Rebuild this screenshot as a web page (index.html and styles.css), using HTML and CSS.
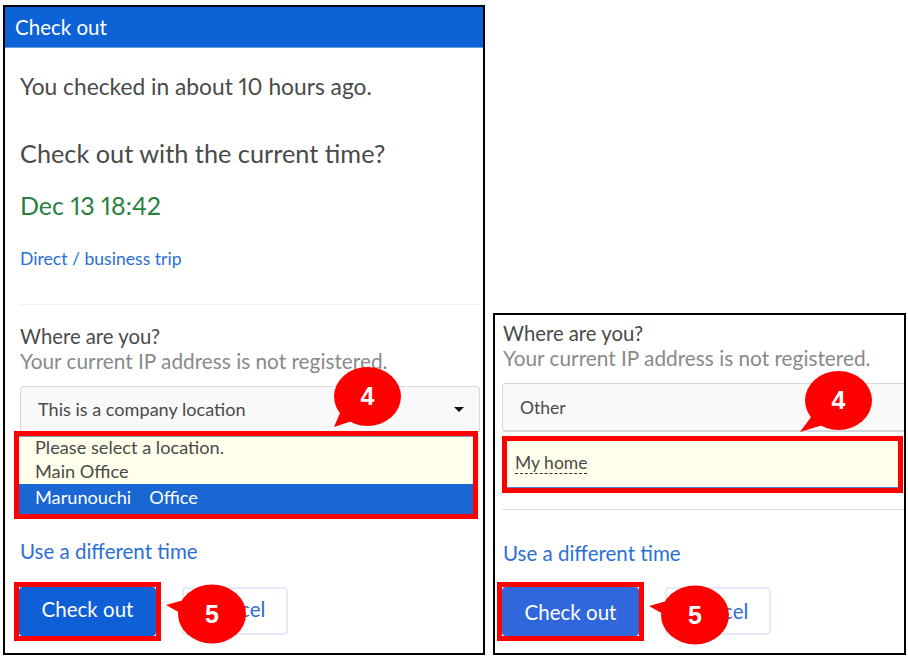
FILE: index.html
```html
<!DOCTYPE html>
<html lang="en">
<head>
  <meta charset="UTF-8">
  <title>Check out</title>
  <link rel="stylesheet" href="styles.css">
</head>
<body>
  <div class="panel panel-main">
    <div class="header">Check out</div>
    <div class="content">
      <p class="checked-in">You checked in about 10 hours ago.</p>
      <p class="question">Check out with the current time?</p>
      <p class="date">Dec 13 18:42</p>
      <a class="trip-link">Direct / business trip</a>
      <div class="divider"></div>
      <p class="where">Where are you?</p>
      <p class="ip-note">Your current IP address is not registered.</p>
      <div class="select">
        <span>This is a company location</span>
        <span class="caret"></span>
      </div>
      <div class="list-back">
        <ul class="location-list">
          <li>Please select a location.</li>
          <li>Main Office</li>
          <li class="selected"><span class="gap">Marunouchi</span>Office</li>
        </ul>
      </div>
      <a class="time-link">Use a different time</a>
      <div class="buttons">
        <div class="btn-frame"><button class="btn-primary">Check out</button></div>
        <button class="btn-cancel">Cancel</button>
      </div>
    </div>
    <svg class="callout callout-4" width="70" height="64" viewBox="0 0 70 64">
      <ellipse cx="35.5" cy="29.5" rx="33.5" ry="29.5" fill="#f00"/>
      <polygon points="2,60 8,46 20,54" fill="#f00"/>
      <text x="35.5" y="38" text-anchor="middle">4</text>
    </svg>
    <svg class="callout callout-5" width="84" height="62" viewBox="0 0 84 62">
      <ellipse cx="48" cy="30" rx="34" ry="29.5" fill="#f00"/>
      <polygon points="2,21 20,16 18,30" fill="#f00"/>
      <text x="48" y="39" text-anchor="middle">5</text>
    </svg>
  </div>

  <div class="panel panel-other">
    <div class="content">
      <p class="where">Where are you?</p>
      <p class="ip-note">Your current IP address is not registered.</p>
      <div class="select">
        <span>Other</span>
      </div>
      <div class="place-input"><span>My home</span></div>
      <div class="divider"></div>
      <a class="time-link">Use a different time</a>
      <div class="buttons">
        <div class="btn-frame"><button class="btn-primary">Check out</button></div>
        <button class="btn-cancel">Cancel</button>
      </div>
    </div>
    <svg class="callout callout-4" width="70" height="64" viewBox="0 0 70 64">
      <ellipse cx="35.5" cy="29.5" rx="33.5" ry="29.5" fill="#f00"/>
      <polygon points="-3,61 8,46 20,54" fill="#f00"/>
      <text x="35.5" y="38" text-anchor="middle">4</text>
    </svg>
    <svg class="callout callout-5" width="84" height="62" viewBox="0 0 84 62">
      <ellipse cx="48" cy="30" rx="34" ry="29.5" fill="#f00"/>
      <polygon points="2,21 20,16 18,30" fill="#f00"/>
      <text x="48" y="39" text-anchor="middle">5</text>
    </svg>
  </div>
</body>
</html>
```

FILE: styles.css
```css
*{
  margin:0;
  padding:0;
  box-sizing:border-box;
}
body {
  width: 908px;
  height: 656px;
  overflow: hidden;
  display: flex;
  align-items: flex-end;
  gap: 8px;
  padding: 5px 0 1px 3px;
  background: #fff;
  font-family: 'Lato', sans-serif;
  font-variant-numeric: proportional-nums;
  color: #4a4a4a;
}
.panel{
  position: relative;
  border: 2px solid #000;
  background: #fff;
}
.panel-main{
  width: 482px;
  height: 650px;
}
.panel-other{
  width: 413px;
  height: 342px;
  overflow: hidden;
}
.header{
  height: 41px;
  line-height: 40px;
  padding-left: 10px;
  background: #0d62d6;
  border-bottom: 1px solid #6c9ce0;
  color: #fff;
  font-size: 20.5px;
}
.content{
  display: flex;
  flex-direction: column;
  padding: 0 3px 0 15px;
}
.panel-other .content{
  padding: 5px 0 0 7px;
}
.panel-other p,
.panel-other a{
  padding-left: 1px;
}
.checked-in{
  margin-top: 25px;
  font-size: 22.75px;
  line-height: 28px;
}
.question{
  margin-top: 37px;
  font-size: 25.3px;
  line-height: 30px;
}
.date{
  margin-top: 21px;
  font-size: 25px;
  line-height: 32px;
  color: #2a8040;
}
.trip-link{
  margin-top: 26px;
  font-size: 17.6px;
  line-height: 24px;
  color: #2b6fd6;
}
.divider{
  height: 1px;
  margin-top: 33px;
  background: #f0f0f0;
}
.panel-other .divider{
  margin-top: 21px;
  background: #d9dce0;
}
.where{
  margin-top: 18px;
  font-size: 20.3px;
  line-height: 26px;
}
.panel-other .where{
  margin-top: 0;
}
.ip-note{
  font-size: 20.8px;
  line-height: 24px;
  color: #8a8a8a;
}
.select{
  display: flex;
  justify-content: space-between;
  align-items: center;
  height: 47px;
  margin-top: 13px;
  padding: 0 15px 0 17px;
  background: #f9f9f9;
  border: 1px solid #d5d8dc;
  border-bottom-width: 2px;
  border-radius: 4px;
  font-size: 18.1px;
}
.panel-other .select{
  width: 440px;
  height: 49px;
  margin-top: 13px;
  font-size: 17.5px;
}
.caret{
  width: 0;
  height: 0;
  border-left: 5px solid transparent;
  border-right: 5px solid transparent;
  border-top: 5px solid #111;
}
.list-back{
  margin: 3px 0 0 -1px;
  padding-right: 7px;
  background: #f1f1f1;
  border-radius: 0 4px 4px 0;
}
.location-list{
  height: 78px;
  padding-top: 0;
  list-style: none;
  background: #ffffeb;
  border-top: 1px solid #8a9bb5;
  font-size: 18.2px;
  line-height: 24px;
  outline: 5px solid #f00;
}
.location-list li{
  position: relative;
  padding-left: 16px;
}
.location-list li:first-child{
  margin-top: -2px;
}
.location-list .selected{
  height: 30px;
  margin-top: 1px;
  line-height: 27px;
  background: #1a66d2;
  color: #fff;
}
.gap{
  margin-right: 18px;
}
.place-input{
  width: 391px;
  height: 47px;
  margin: 9px 0 0 5px;
  padding: 11px 0 0 8px;
  background: #ffffeb;
  border-bottom: 1px solid #4f7fdc;
  font-size: 17.5px;
  line-height: 21px;
  outline: 5px solid #f00;
}
.place-input span{
  border-bottom: 1px dashed #333;
  display: inline-block;
}
.time-link{
  margin-top: 24px;
  font-size: 20.5px;
  line-height: 26px;
  color: #2b6fd6;
}
.panel-other .time-link{
  margin-top: 30px;
}
.buttons{
  display: flex;
  gap: 21px;
  margin: 18px 0 0 -6px;
  align-items: flex-start;
}
.panel-other .buttons{
  margin: 16px 0 0 -5px;
}
.btn-frame{
  border: 5px solid #f00;
}
button{
  display: block;
  font-family: inherit;
  font-size: 20.5px;
  border-radius: 4px;
}
.btn-primary{
  width: 137px;
  height: 49px;
  padding-bottom: 5px;
  border: 0;
  background: #0f5fd6;
  color: #fff;
}
.btn-cancel{
  width: 106px;
  height: 48px;
  margin-top: 5px;
  padding-bottom: 5px;
  background: #fff;
  border: 2px solid #e6ebf7;
  color: #2b6fd6;
}
.panel-other .btn-primary{
  padding-bottom: 0;
  background: #3068dc;
}
.panel-other .btn-cancel{
  padding-bottom: 0;
}
.callout{
  position: absolute;
  overflow: visible;
}
.callout text{
  fill: #fff;
  font-family: 'Liberation Sans', sans-serif;
  font-size: 25px;
  font-weight: 700;
}
.panel-main .callout-4{
  left: 327px;
  top: 360px;
}
.panel-main .callout-5{
  left: 159px;
  top: 577px;
}
.panel-other .callout-4{
  left: 308px;
  top: 56px;
}
.panel-other .callout-5{
  left: 152px;
  top: 270px;
}
```
